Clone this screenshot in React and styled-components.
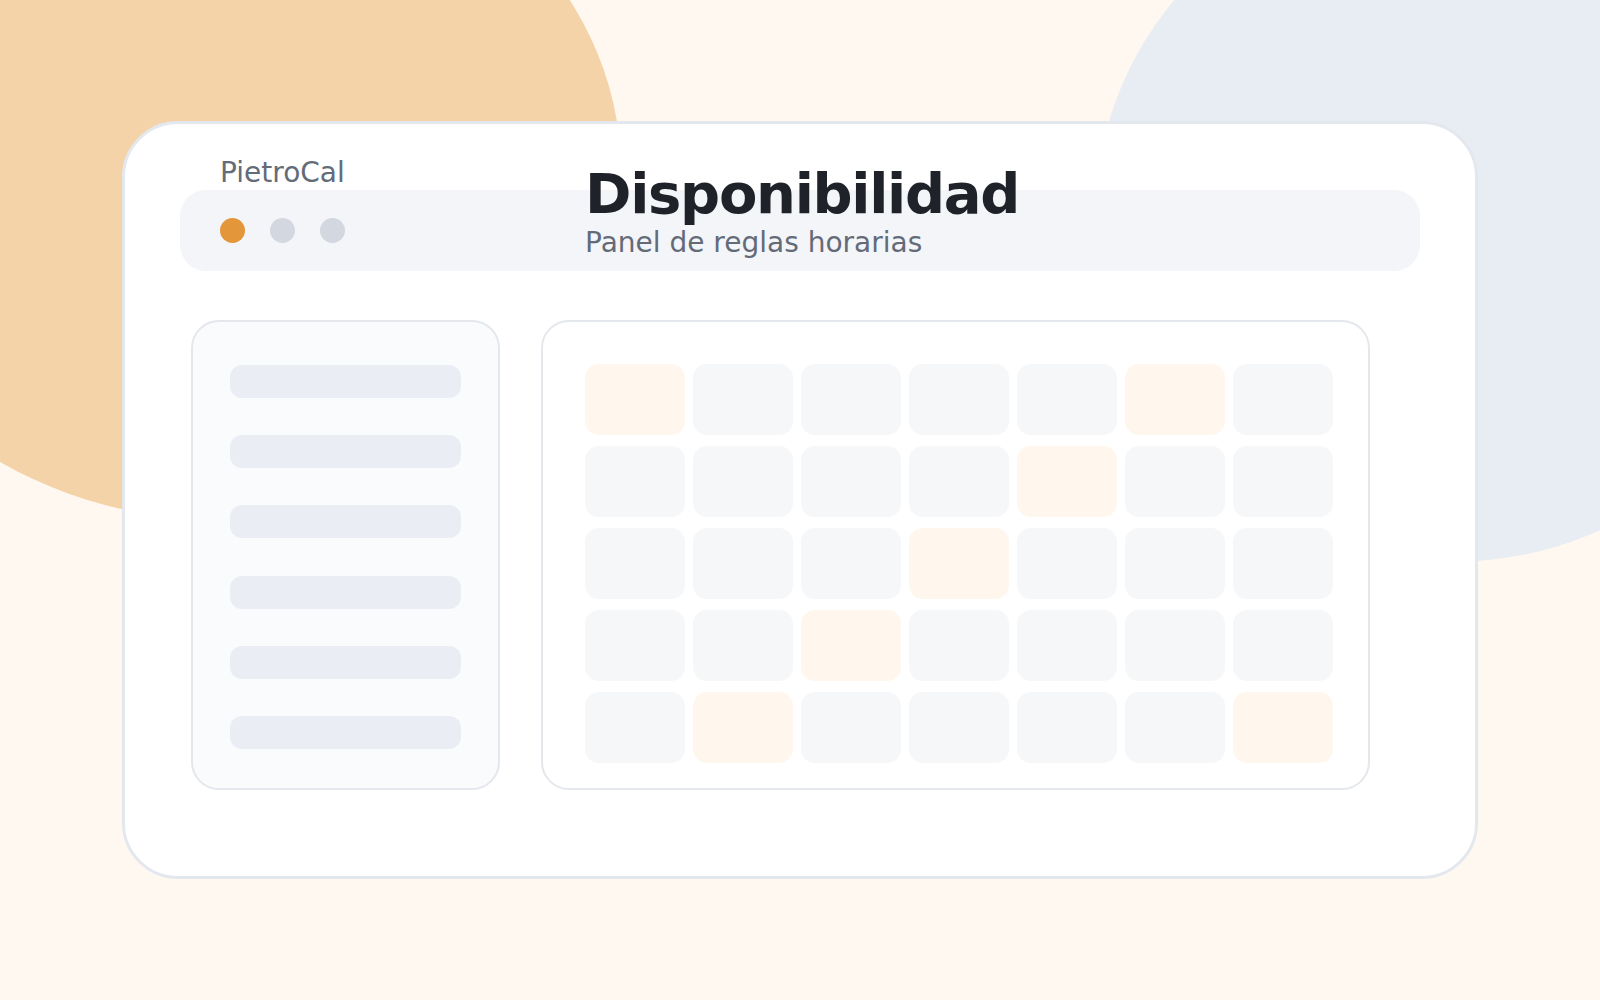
import React from 'react';
import styled, { createGlobalStyle } from 'styled-components';

const GlobalStyle = createGlobalStyle`
  * { box-sizing: border-box; }
  html, body { margin: 0; padding: 0; }
  body {
    background: #fff8f0;
    font-family: "DejaVu Sans", "Noto Sans", sans-serif;
  }
`;

const Page = styled.div`
  position: relative;
  width: 100%;
  height: 100vh;
  overflow: hidden;
  display: flex;
  align-items: center;
  justify-content: center;
  background: #fff8f0;
`;

// soft background shapes behind the window
const Blob = styled.div`
  position: absolute;
  border-radius: 50%;
  background: ${p => p.$color};
  left: ${p => p.$left}px;
  top: ${p => p.$top}px;
  width: ${p => p.$w}px;
  height: ${p => p.$h}px;
`;

const Window = styled.section`
  position: relative;
  z-index: 1;
  width: 1356px;
  height: 758px;
  background: #ffffff;
  border: 3px solid #e3e8ef;
  border-radius: 56px;
  padding: 31px 55px 86px;
  display: flex;
  flex-direction: column;
`;

const Header = styled.header`
  display: grid;
  grid-template-columns: 1fr;
  grid-template-rows: auto;
  & > * { grid-area: 1 / 1; }
`;

const TitleBar = styled.div`
  margin-top: 35px;
  height: 81px;
  background: #f3f5f8;
  border-radius: 26px;
  display: flex;
  align-items: center;
  gap: 25px;
  padding-left: 40px;
`;

const Dot = styled.span`
  width: 25px;
  height: 25px;
  border-radius: 50%;
  background: ${p => (p.$active ? '#e4963a' : '#d3d7df')};
`;

const Brand = styled.div`
  align-self: start;
  justify-self: start;
  margin-left: 40px;
  margin-top: 2px;
  font-size: 28px;
  line-height: 32px;
  color: #646b78;
`;

const Heading = styled.div`
  align-self: start;
  justify-self: start;
  margin-left: 405px;
  margin-top: 8px;
`;

const Title = styled.h1`
  margin: 0;
  font-size: 56px;
  line-height: 61.6px;
  font-weight: 700;
  letter-spacing: -1.3px;
  color: #1f2229;
`;

const Subtitle = styled.p`
  margin: 2px 0 0;
  font-size: 28px;
  line-height: 32px;
  color: #646b78;
`;

const Body = styled.div`
  margin-top: 49px;
  margin-left: 11px;
  display: grid;
  grid-template-columns: 309px 829px;
  gap: 41px;
`;

const Sidebar = styled.aside`
  height: 470px;
  background: #f9fbfc;
  border: 2px solid #e4e7ec;
  border-radius: 28px;
  padding: 43px 37px;
  display: flex;
  flex-direction: column;
  gap: 37.2px;
`;

const RuleLine = styled.div`
  flex: none;
  height: 33px;
  border-radius: 12px;
  background: #eaeef4;
`;

const Calendar = styled.div`
  height: 470px;
  background: #ffffff;
  border: 2px solid #e4e7ec;
  border-radius: 28px;
  padding: 42px;
`;

const Grid = styled.div`
  display: grid;
  grid-template-columns: repeat(7, 100px);
  grid-auto-rows: 71px;
  column-gap: 8px;
  row-gap: 11px;
`;

const Cell = styled.div`
  border-radius: 14px;
  background: ${p => (p.$hot ? '#fff7ed' : '#f6f7f9')};
`;

// highlighted slots per week row
const highlights = [[0, 5], [4], [3], [2], [1, 6]];

export default function App() {
  return (
    <>
      <GlobalStyle />
      <Page>
        <Blob $color="#f5d3a9" $left={-179} $top={-178} $w={800} $h={698} />
        <Blob $color="#e8ecf3" $left={1095} $top={-128} $w={712} $h={690} />
        <Window>
          <Header>
            <TitleBar>
              <Dot $active />
              <Dot />
              <Dot />
            </TitleBar>
            <Brand>PietroCal</Brand>
            <Heading>
              <Title>Disponibilidad</Title>
              <Subtitle>Panel de reglas horarias</Subtitle>
            </Heading>
          </Header>
          <Body>
            <Sidebar>
              {Array.from({ length: 6 }).map((_, i) => (
                <RuleLine key={i} />
              ))}
            </Sidebar>
            <Calendar>
              <Grid>
                {highlights.map((row, r) =>
                  Array.from({ length: 7 }).map((_, c) => (
                    <Cell key={`${r}-${c}`} $hot={row.includes(c)} />
                  ))
                )}
              </Grid>
            </Calendar>
          </Body>
        </Window>
      </Page>
    </>
  );
}
